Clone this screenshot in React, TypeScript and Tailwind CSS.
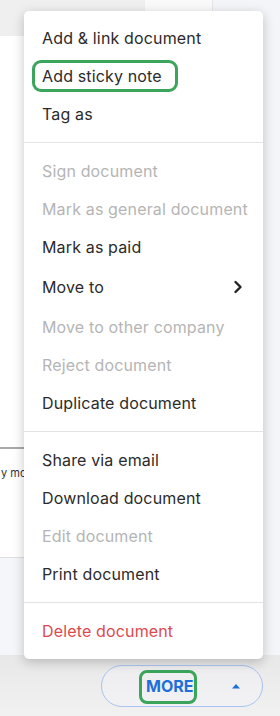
import React from "react";

type Item = { label: string; kind?: "disabled" | "danger"; chevron?: boolean; tall?: boolean; highlight?: boolean };

const sections: Item[][] = [
  [
    { label: "Add & link document" },
    { label: "Add sticky note", highlight: true },
    { label: "Tag as" },
  ],
  [
    { label: "Sign document", kind: "disabled" },
    { label: "Mark as general document", kind: "disabled" },
    { label: "Mark as paid" },
    { label: "Move to", chevron: true, tall: true },
    { label: "Move to other company", kind: "disabled" },
    { label: "Reject document", kind: "disabled" },
    { label: "Duplicate document" },
  ],
  [
    { label: "Share via email" },
    { label: "Download document" },
    { label: "Edit document", kind: "disabled" },
    { label: "Print document" },
  ],
  [{ label: "Delete document", kind: "danger" }],
];

function Row({ item }: { item: Item }) {
  const color =
    item.kind === "disabled" ? "text-[#b5b5b5]" : item.kind === "danger" ? "text-[#dc4a4f]" : "text-[#2b2b2b]";
  return (
    <div className={`relative flex items-center justify-between pl-[18px] pr-[18px] ${item.tall ? "h-[42px]" : "h-[38px]"}`}>
      <span className={`whitespace-nowrap text-[16px] leading-none tracking-[0.15px] ${color}`}>{item.label}</span>
      {item.chevron && (
        <svg width="10" height="14" viewBox="0 0 10 14" className="mr-[2px] shrink-0">
          <path d="M2.5 2 L7.5 7 L2.5 12" fill="none" stroke="#222" strokeWidth="2.4" strokeLinecap="round" strokeLinejoin="round" />
        </svg>
      )}
      {item.highlight && (
        <div className="absolute left-[8px] top-[3px] w-[146px] h-[32px] rounded-[9px] border-[3px] border-[#3ba55c]" />
      )}
    </div>
  );
}

export default function App() {
  return (
    <div
      className="relative w-[280px] h-[716px] overflow-hidden bg-white"
      style={{ fontFamily: "Inter, 'Noto Sans', sans-serif" }}
    >
      {/* background page */}
      <div className="flex h-[655px]">
        <div className="flex flex-col w-[212px]">
          <div className="flex h-[36px]">
            <div className="w-[145px] bg-[#efefef]" />
            <div className="flex-1 bg-[#fafafa]" />
          </div>
          <div className="h-[411px] bg-white" />
          <div className="h-[2px] w-[30px] bg-[#a9a9a9]" />
          <div className="h-[108px] bg-white pt-[10px] pl-[1px]">
            <span className="text-[11px] text-[#333]">y mo</span>
          </div>
          <div className="h-[1px] bg-[#dedede]" />
          <div className="flex-1 bg-[#f5f6fa]" />
        </div>
        <div className="w-[1px] bg-[#e6e6e6]" />
        <div className="flex-1 bg-[#f4f5f9]" />
      </div>
      <div className="h-[61px] bg-gradient-to-b from-[#e8e8e8] to-[#f1f1f1] flex items-center justify-end pr-[17px]">
        <div className="relative flex items-center w-[162px] h-[42px] rounded-full border border-[#a9c4ef] bg-[#f5f6fa]/40">
          <span className="ml-[44px] text-[16px] font-bold text-[#1f6fd8]">MORE</span>
          <svg width="10" height="6" viewBox="0 0 10 6" className="ml-auto mr-[21px]">
            <path d="M1 5.5 L5 1 L9 5.5 Z" fill="#1f6fd8" />
          </svg>
          <div className="absolute left-[37px] top-[4px] w-[58px] h-[34px] rounded-[8px] border-[3px] border-[#3ba55c]" />
        </div>
      </div>

      {/* dropdown menu */}
      <div className="absolute left-[24px] top-[11px] w-[239px] rounded-[5px] bg-white shadow-[0_3px_12px_rgba(0,0,0,0.22)]">
        {sections.map((sec, i) => (
          <div key={i}>
            {i > 0 && <div className="h-[1px] bg-[#e3e3e3]" />}
            <div className={`${i === 0 ? "pt-[8px]" : "pt-[9px]"} pb-[9px]`}>
              {sec.map((it) => (
                <Row key={it.label} item={it} />
              ))}
            </div>
          </div>
        ))}
      </div>
    </div>
  );
}
